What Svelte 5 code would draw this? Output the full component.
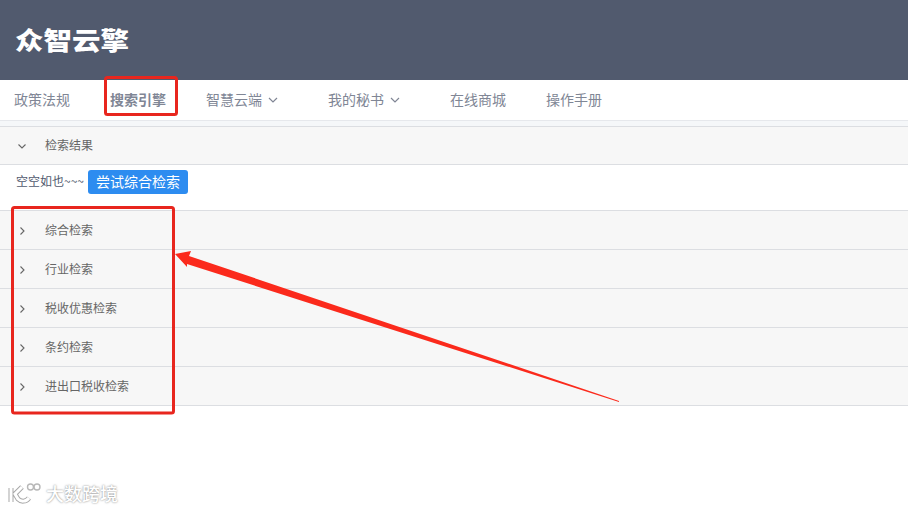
<script lang="ts">
  const navItems = [
    { label: '政策法规' },
    { label: '搜索引擎', active: true },
    { label: '智慧云端', sub: true },
    { label: '我的秘书', sub: true },
    { label: '在线商城' },
    { label: '操作手册' }
  ]
  const panels = ['综合检索', '行业检索', '税收优惠检索', '条约检索', '进出口税收检索']
</script>

<div class="page">
  <header class="top">
    <span class="logo">众智云擎</span>
  </header>

  <nav class="nav">
    {#each navItems as item}
      <div class="nav-item" class:active={item.active} class:sub={item.sub}>
        <span>{item.label}</span>
        {#if item.sub}
          <svg class="nav-chev" width="10" height="6" viewBox="0 0 10 6">
            <path d="M1 1l4 4 4-4" fill="none" stroke="#808695" stroke-width="1.2" />
          </svg>
        {/if}
      </div>
    {/each}
  </nav>

  <div class="band"></div>

  <section class="collapse">
    <div class="panel-head first">
      <svg class="arrow" width="12" height="12" viewBox="0 0 12 12">
        <path d="M2.500 4.500L6 8l3.500-3.500" fill="none" stroke="#666" stroke-width="1.100" />
      </svg>
      <span>检索结果</span>
    </div>
    <div class="panel-body">
      <span class="empty">空空如也~~~</span>
      <button class="try">尝试综合检索</button>
    </div>
    {#each panels as name}
      <div class="panel-head">
        <svg class="arrow" width="12" height="12" viewBox="0 0 12 12">
          <path d="M4.500 3.500L8 7l-3.500 3.500" fill="none" stroke="#666" stroke-width="1.100" />
        </svg>
        <span>{name}</span>
      </div>
    {/each}
  </section>

  <!-- annotations drawn on top of the screenshot -->
  <svg class="marks" width="908" height="511" viewBox="0 0 908 511">
    <rect x="105.500" y="77.500" width="71" height="37" rx="2" fill="none" stroke="#e8261e" stroke-width="3" />
    <rect x="12.500" y="207.500" width="161" height="205.500" rx="2" fill="none" stroke="#e8261e" stroke-width="3" />
    <polygon points="175,254 191,251 189,256 619,401 619,402 187,264 187,267" fill="#fb2a1c" />
  </svg>

  <div class="mark">
    <svg width="34" height="24" viewBox="0 0 34 24">
      <g fill="none" stroke="#a8a8a8" stroke-width="5">
        <path d="M4 7v14M15 6l-7 7 3 5c3 3 8 3 11-1" />
      </g>
      <g fill="none" stroke="#fff" stroke-width="3">
        <path d="M4 7v14M15 6l-7 7 3 5c3 3 8 3 11-1" />
      </g>
      <g fill="none" stroke="#b8b8b8" stroke-width="1.400">
        <circle cx="23.500" cy="6" r="3" />
        <circle cx="30" cy="6" r="3" />
      </g>
    </svg>
    <span>大数跨境</span>
  </div>
</div>

<style>
  :global(body) {
    margin: 0;
    background: #fff;
  }
  .page {
    position: relative;
    width: 908px;
    height: 511px;
    overflow: hidden;
    font-family: "Noto Sans CJK SC", "Noto Sans", sans-serif;
  }
  .top {
    height: 80px;
    background: #515a6e;
    display: flex;
    align-items: center;
    padding: 0 0 2px 15px;
    box-sizing: border-box;
  }
  .logo {
    color: #fff;
    font-size: 28.500px;
    font-weight: 900;
    line-height: 1;
    transform: scaleY(0.88);
  }
  .nav {
    height: 40px;
    border-bottom: 1px solid #e6e8ec;
    display: flex;
    gap: 40px;
    padding-left: 14px;
    background: #fff;
  }
  .nav-item {
    display: flex;
    align-items: center;
    font-size: 14px;
    color: #808695;
    width: 56px;
  }
  .nav-item span {
    position: relative;
    top: -1px;
  }
  .nav-item.sub {
    width: 82px;
  }
  .nav-item.active {
    font-weight: 700;
  }
  .nav-chev {
    margin-left: 6px;
  }
  .band {
    height: 5px;
    background: #f5f7f9;
  }
  .collapse {
    border-top: 1px solid #dcdee2;
    color: #666;
    font-size: 12px;
  }
  .panel-head {
    height: 38px;
    background: #f7f7f7;
    border-bottom: 1px solid #dcdee2;
    display: flex;
    align-items: center;
    padding-left: 16px;
  }
  .panel-head.first {
    height: 37px;
  }
  .panel-head span {
    position: relative;
    top: -1px;
  }
  .arrow {
    margin-right: 17px;
    flex: none;
  }
  .panel-body {
    height: 46px;
    box-sizing: border-box;
    padding: 5px 0 0 16px;
    border-bottom: 1px solid #dcdee2;
    background: #fff;
    color: #515a6e;
    display: flex;
    align-items: flex-start;
  }
  .empty {
    line-height: 22px;
  }
  .try {
    margin-left: 4px;
    width: 100px;
    height: 24px;
    border: 0;
    border-radius: 3px;
    padding: 0 0 2px;
    background: #2d8cf0;
    color: #fff;
    font: inherit;
    font-size: 14px;
    line-height: 22px;
  }
  .marks {
    position: absolute;
    left: 0;
    top: 0;
    pointer-events: none;
  }
  .mark {
    position: absolute;
    left: 7px;
    top: 481px;
    display: flex;
    align-items: center;
    gap: 5px;
    color: #fff;
    font-size: 18px;
    font-weight: 500;
    line-height: 24px;
    text-shadow: 0 0 2px #777;
  }
</style>
